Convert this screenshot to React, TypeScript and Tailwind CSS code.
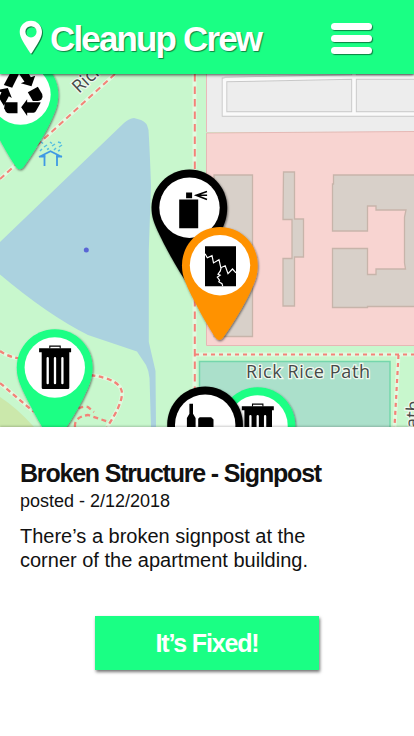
import React from "react";

const GREEN = "#1aff84";

type PinProps = { x: number; y: number; color: string; children?: React.ReactNode };

function Pin({ x, y, color, children }: PinProps) {
  return (
    <g transform={`translate(${x} ${y})`}>
      <path
        filter="url(#pinShadow)"
        fill={color}
        d="M0-38.2C21.2-38.2 37.700-21 37.700 0C37.700 9 35.5 15 32 23C24 41 13 58 3 72.5Q-.8 77-4.5 72.5C-14 58-24 40-32 23C-36 14-38 8-38 0C-38-21-21-38.2 0-38.2Z"
      />
      <circle r="30.2" fill="#fff" />
      {children}
    </g>
  );
}

function TrashIcon() {
  return (
    <g>
      <path fill="none" stroke="#000" strokeWidth="1.1" d="M-5-19v-2.4h10.4v2.4" />
      <path d="M-15.7-19.2h32v4h-1.8V20.2q0 1.3-1.3 1.3h-25q-1.3 0-1.3-1.3v-35.4h-2.6z" />
      <path stroke="#fff" strokeWidth="2.3" strokeLinecap="round" d="M-7.1-9.3V15.7M.2-9.3V15.7M7.6-9.3V15.7" />
    </g>
  );
}

function SprayIcon() {
  return (
    <g>
      <path d="M-10.3-8.3h19v28.8h-19zM-3.4-15.3h6v5.8h-6z" />
      <path fill="none" stroke="#000" strokeWidth="1.6" d="M17.5-16.3L6.7-12.5l10.8 4.3M6-12.5h11.6" />
    </g>
  );
}

function CrackIcon() {
  return (
    <g>
      <path d="M-15-19h31v40h-31z" />
      <path
        fill="none"
        stroke="#fff"
        strokeWidth="1.2"
        d="M-15-11.5L-12.7-7.500-8-9.500-6.500-2.300-1-5.500.800 2.500 5.200.500 8 8.500 12.500 3.800 16 7.700M1.200 2.500L.2 6-2 9 .2 10-2.700 12-.5 15-1.200 16.500 2 18.500 2.700 21"
      />
    </g>
  );
}

function BottleIcon() {
  return (
    <g>
      <path d="M-15.8-21h3.6v10l2.6 4.4V25h-8.7V-6.6l2.5-4.4z" />
      <path d="M-5.500-7.500h11.500l2.300 2.300v30H-7V-6z" />
    </g>
  );
}

function RecycleIcon() {
  return (
    <g transform="translate(-21 -24.5) scale(.33333)">
      <path d="M13 45L35 4Q39-3 47-3L58 13 38 53Z" />
      <path d="M49-3H80L94 22 107 17 96 49 64 40 75 35Z" />
      <path d="M85 67L115 50 128 72Q131 80 126 88 122 93 115 93H100Z" />
      <path d="M65 112L83 88V97H121Q124 96 123 99L109 124Q107 128 102 128H83V138Z" />
      <path d="M16 97H54V130H28Q23 130 19 125L14 115Z" />
      <path d="M-10 61L25 54 37 84 28 79 13 107 1 88Q-3 82 2 76L6 67Z" />
    </g>
  );
}

function MapView() {
  return (
    <svg className="block h-[353px] w-full" viewBox="0 74 414 353" role="img" aria-label="Map">
      <defs>
        <filter id="pinShadow" x="-20%" y="-20%" width="140%" height="140%">
          <feDropShadow dx="0.8" dy="1.2" stdDeviation="1" floodColor="#000" floodOpacity=".55" />
        </filter>
      </defs>
      <path fill="#c8f7cd" d="M0 74h414v353H0z" />
      <path fill="#cbe8ab" d="M0 397Q17 408 34 427H0z" />
      <path
        fill="#abd2df"
        d="M0 242L124 123Q129 118.500 134 118L141 120Q147 122 148.500 130Q150 155 151 186L148.800 250V342L155.500 371 156 427H151L149.500 378Q149 371 146 365L137 351.500 88 335Q48 315 0 274.500Z"
      />
      <circle cx="86.300" cy="250" r="2.500" fill="#5965d5" />

      <path fill="#ededed" d="M206.500 74H414v58H206.500z" />
      <path fill="#f8d4d1" stroke="#e5b8b5" d="M206.500 133L415 131.500V345.500H206.500z" />
      <path stroke="#e9b9ba" d="M206.500 74v58" />
      <g fill="none">
        <path stroke="#c8c8c8" strokeWidth="5.500" d="M224.500 79.500L352 77H414M224.500 77.500L224.500 114H414M354 74V113" />
        <path stroke="#fafafa" strokeWidth="3.700" d="M224.500 79.500L352 77H414M224.500 78.500L224.500 114H414M354 74V113" />
      </g>

      <g fill="#d8d0c9" stroke="#c7b4aa" strokeWidth="1.300">
        <path d="M214 175h38.500v161.500H214z" />
        <path d="M283.500 172h11v47h9v38h-9v49h-11.500v-47.500h9v-39h-9z" />
        <path d="M333.500 175H420V306.500H367.500V307.500H332.500V248.500H367.500V274.500H376V269H405.500L404.500 263V217L406 210H376V206H367.500V231H332.500V184H333.500z" />
      </g>

      <path fill="#abe0cb" stroke="#75d6ac" strokeWidth="1.500" d="M199.500 361.500h190.500v70H199.500z" />

      <g fill="none" stroke="#edfbe8" strokeWidth="4" opacity=".7">
        <path d="M115 74L0 179M194.500 74V427M195 354.500H414M398.500 355L394.500 427" />
        <path d="M0 351Q8 357 22 359M0 383L34 412M90 375Q121 379 122 393Q122 405 107 427" />
      </g>
      <g fill="none" stroke="#f38378" strokeWidth="2" strokeDasharray="6 4">
        <path d="M115 74L0 179" />
        <path strokeDasharray="7.500 5" d="M194.800 74V427" />
        <path strokeWidth="2.200" strokeDasharray="4 4" d="M195 354.500H414M398.500 355L394.500 427" />
        <path strokeWidth="2.300" strokeDasharray="5 3.500" d="M0 351Q8 357 22 359M0 383L34 412M90 375Q121 379 122 393Q122 405 107 427M72 414Q80 405 88 407L94 412M75 427Q74 417 88 415L109 422" />
      </g>

      <g fill="none" stroke="#3f99e4" strokeWidth="1.800">
        <path d="M39 157L50.500 151.300 62 157M44.500 155v11M57 155v11M39.500 156.500h6M56 156.500h6" />
        <path stroke="#55bfe0" strokeWidth="1.500" d="M41 142l2 1.500M50 142l2 1.500M58 142l3 1M44 147l3-2M52 146l3-2M59 147l3-2M40 151l2-2M47 149.500l2-1M54 150l2-2M58 151l2-1" />
      </g>

      <g
        fill="#454a48"
        stroke="#eff8ee"
        strokeWidth="2.500"
        paintOrder="stroke"
        className="font-['Open_Sans','Noto_Sans',sans-serif] font-medium"
      >
        <text x="246" y="377.500" fontSize="18" textLength="124">Rick Rice Path</text>
        <text transform="translate(79 94) rotate(-43)" fontSize="18">Rick</text>
        <text transform="translate(417.500 439) rotate(-87)" fontSize="18">Path</text>
      </g>

      <Pin x={20.500} y={94.500} color={GREEN}><RecycleIcon /></Pin>
      <Pin x={189.500} y={207.700} color="#000"><SprayIcon /></Pin>
      <Pin x={220} y={265.200} color="#ff9200"><CrackIcon /></Pin>
      <Pin x={54.800} y={367.500} color={GREEN}><TrashIcon /></Pin>
      <Pin x={257.500} y={425.500} color={GREEN}><TrashIcon /></Pin>
      <Pin x={205.200} y={424.700} color="#000"><BottleIcon /></Pin>
    </svg>
  );
}

export default function App() {
  return (
    <div className="flex h-[736px] w-[414px] flex-col overflow-hidden bg-white font-['Liberation_Sans',Arial,sans-serif] text-[#111]">
      <header className="relative z-10 flex h-[74px] shrink-0 items-center justify-between bg-[#1aff84] pr-[42px] pl-[19px] shadow-[0_1px_3px_rgba(0,0,0,0.7)]">
        <div className="flex items-center">
          <svg className="mr-[7px] h-[34px] w-6 overflow-visible drop-shadow-[1px_1px_0.5px_rgba(0,0,0,0.5)]" viewBox="0 0 24 34">
            <path
              fill="#fff"
              fillRule="evenodd"
              d="M12 .8C5.500.8.700 5.700.700 12C.700 18 6 24.500 11.200 33Q12 34 12.800 33C18 24.500 23 18 23 12C23 5.700 18.300.8 12 .8ZM12 6.200a5.600 5.600 0 1 1 0 11.200a5.600 5.600 0 0 1 0-11.200Z"
            />
          </svg>
          <h1 className="mt-1 text-[35px] leading-10 font-bold tracking-[-1.85px] whitespace-nowrap text-white [text-shadow:1px_1px_1px_rgba(0,0,0,0.5)]">
            Cleanup Crew
          </h1>
        </div>
        <button aria-label="Menu" className="mt-0.5 flex w-[41px] flex-col gap-[5px]">
          <span className="h-[7px] rounded-full bg-white shadow-[1px_1px_1px_rgba(0,0,0,0.5)]" />
          <span className="h-[7px] rounded-full bg-white shadow-[1px_1px_1px_rgba(0,0,0,0.5)]" />
          <span className="h-[7px] rounded-full bg-white shadow-[1px_1px_1px_rgba(0,0,0,0.5)]" />
        </button>
      </header>
      <MapView />
      <main className="relative flex flex-1 flex-col bg-white px-5 pt-[31px] shadow-[0_-1px_2px_rgba(0,0,0,0.2)]">
        <h2 className="text-[25px] leading-[30px] font-bold tracking-[-1.2px] whitespace-nowrap">Broken Structure - Signpost</h2>
        <p className="mt-px text-[18px] leading-6">posted - 2/12/2018</p>
        <p className="mt-[11px] text-[20px] leading-6 whitespace-nowrap">
          There’s a broken signpost at the
          <br />
          corner of the apartment building.
        </p>
        <button className="mt-11 ml-[75px] h-[54px] w-[224px] bg-[#1aff84] pt-0.5 text-[25px] font-bold tracking-[-1.15px] text-white shadow-[1px_2px_3px_rgba(0,0,0,0.55)]">
          It’s Fixed!
        </button>
      </main>
    </div>
  );
}
